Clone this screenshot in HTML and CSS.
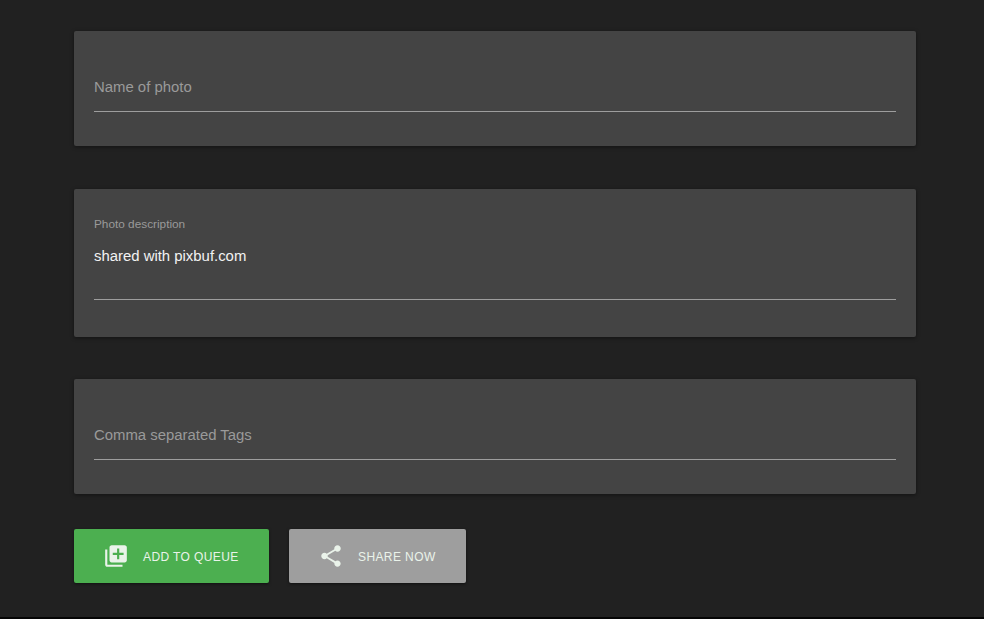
FILE: index.html
```html
<!DOCTYPE html>
<html lang="en">
<head>
<meta charset="utf-8">
<title>Share photo</title>
<link rel="stylesheet" href="styles.css">
</head>
<body>
<main class="page">
  <section class="card card-name">
    <div class="field">
      <div class="placeholder">Name of photo</div>
    </div>
  </section>
  <section class="card card-desc">
    <div class="label">Photo description</div>
    <div class="value">shared with pixbuf.com</div>
    <div class="rule"></div>
  </section>
  <section class="card card-name">
    <div class="field">
      <div class="placeholder">Comma separated Tags</div>
    </div>
  </section>
  <div class="actions">
    <button class="btn btn-queue" type="button">
      <svg class="icon" viewBox="0 0 24 24" width="26" height="26" aria-hidden="true"><path fill="currentColor" d="M4 6H2v14c0 1.100.9 2 2 2h14v-2H4V6zm16-4H8c-1.100 0-2 .9-2 2v12c0 1.100.9 2 2 2h12c1.100 0 2-.9 2-2V4c0-1.100-.9-2-2-2zm-1 9h-4v4h-2v-4H9V9h4V5h2v4h4v2z"/></svg>
      <span class="btn-text">ADD TO QUEUE</span>
    </button>
    <button class="btn btn-share" type="button">
      <svg class="icon" viewBox="0 0 24 24" width="26" height="26" aria-hidden="true"><path fill="currentColor" d="M18 16.080c-.76 0-1.440.3-1.960.77L8.910 12.700c.05-.23.09-.46.09-.7s-.04-.47-.09-.7l7.050-4.110c.54.5 1.250.81 2.040.81 1.660 0 3-1.340 3-3s-1.340-3-3-3-3 1.340-3 3c0 .24.040.47.090.7L8.040 9.810C7.500 9.310 6.790 9 6 9c-1.660 0-3 1.340-3 3s1.340 3 3 3c.79 0 1.500-.31 2.040-.81l7.120 4.160c-.05.21-.08.43-.08.65 0 1.610 1.310 2.920 2.920 2.920s2.920-1.310 2.920-2.920-1.310-2.920-2.920-2.920z"/></svg>
      <span class="btn-text">SHARE NOW</span>
    </button>
  </div>
</main>
<div class="bottom-strip"></div>
</body>
</html>
```
FILE: styles.css
```css
* { box-sizing: border-box; }
html, body { margin: 0; padding: 0; height: 100%; }
body {
  display: flex;
  flex-direction: column;
  background: #212121;
  font-family: "Liberation Sans", Arial, sans-serif;
  overflow: hidden;
}
.page {
  flex: 1;
  width: 842px;
  margin-left: 74px;
  padding-top: 31px;
}
.bottom-strip {
  flex: none;
  height: 2px;
  background: #050505;
}
.card {
  background: #444444;
  border-radius: 2px;
  padding: 0 20px;
  box-shadow: 0 1px 4px rgba(0, 0, 0, 0.45);
}
.card-name {
  height: 115px;
  padding-top: 46px;
}
.field {
  height: 35px;
  border-bottom: 1px solid #9e9e9e;
}
.placeholder {
  font-size: 14.900px;
  line-height: 20px;
  color: #9a9a9a;
}
.card-desc {
  height: 148px;
  margin: 43px 0 42px;
  padding-top: 28px;
}
.label {
  font-size: 11.800px;
  line-height: 14px;
  color: #9a9a9a;
}
.value {
  margin-top: 15px;
  font-size: 14.900px;
  line-height: 20px;
  color: #f2f2f2;
}
.rule {
  margin-top: 33px;
  height: 1px;
  background: #9e9e9e;
}
.actions {
  display: flex;
  gap: 20px;
  margin-top: 35px;
}
.btn {
  display: flex;
  align-items: center;
  height: 54px;
  padding: 0 0 0 29px;
  border: 0;
  border-radius: 2px;
  color: #eaf3ea;
  font-family: inherit;
  font-size: 12px;
  letter-spacing: 0.4px;
  box-shadow: 0 1px 3px rgba(0, 0, 0, 0.5);
}
.btn-text { padding-top: 2px; }
.btn-queue {
  width: 195px;
  background: #4caf50;
}
.btn-share {
  width: 177px;
  background: #9e9e9e;
}
.icon { margin-right: 14px; flex: none; }
```
